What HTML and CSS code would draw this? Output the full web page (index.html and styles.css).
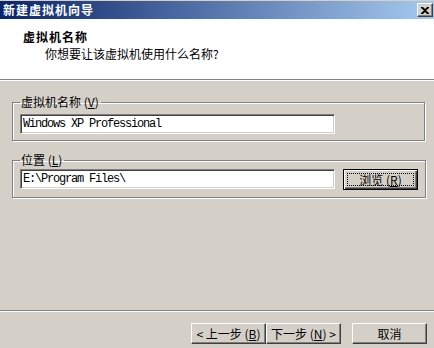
FILE: index.html
```html
<!DOCTYPE html>
<html lang="zh-CN">

<head>
    <meta charset="UTF-8">
    <title>新建虚拟机向导</title>
    <link rel="stylesheet" href="styles.css">
</head>

<body>
    <div class="window">
        <div class="titlebar">
            <span class="title">新建虚拟机向导</span>
            <span class="close-btn">
                <svg width="8" height="7" viewBox="0 0 8 7">
                    <path d="M0 0h2l2 2 2-2h2v1L5 3.5 8 6v1H6L4 5 2 7H0V6l3-2.5L0 1z" fill="#000" />
                </svg>
            </span>
        </div>
        <div class="header">
            <div class="header-title">虚拟机名称</div>
            <div class="header-sub">你想要让该虚拟机使用什么名称?</div>
        </div>
        <div class="etched"></div>

        <div class="content">
            <fieldset class="group">
                <legend>虚拟机名称 (<u>V</u>)</legend>
                <input type="text" class="textbox" value="Windows XP Professional">
            </fieldset>
            <fieldset class="group group-location">
                <legend>位置 (<u>L</u>)</legend>
                <div class="row">
                    <input type="text" class="textbox" value="E:\Program Files\">
                    <button type="button" class="btn btn-default">浏览 (<u>R</u>)</button>
                </div>
            </fieldset>
        </div>

        <div class="etched"></div>
        <div class="footer">
            <button type="button" class="btn">&lt; 上一步 (<u>B</u>)</button>
            <button type="button" class="btn">下一步 (<u>N</u>) &gt;</button>
            <button type="button" class="btn btn-cancel">取消</button>
        </div>
    </div>
</body>

</html>
```

FILE: styles.css
```css
body {
    margin: 0;
    background-color: #d4d0c8;
    font-family: "Noto Sans CJK SC", "Liberation Sans", sans-serif;
    font-size: 12px;
    color: #000;
}

.window {
    width: 434px;
    height: 348px;
    padding-top: 1px;
    box-sizing: border-box;
    display: flex;
    flex-direction: column;
    background-color: #d4d0c8;
    overflow: hidden;
}

.titlebar {
    height: 18px;
    display: flex;
    align-items: center;
    justify-content: space-between;
    padding: 0 1px 0 3px;
    background: linear-gradient(to right, #0a246a, #a6caf0);
}

.title {
    color: #fff;
    font-weight: bold;
    letter-spacing: 1px;
    line-height: 14px;
}

.close-btn {
    width: 14px;
    height: 12px;
    display: flex;
    align-items: center;
    justify-content: center;
    background-color: #d4d0c8;
    border: 1px solid;
    border-color: #fff #404040 #404040 #fff;
    box-shadow: inset -1px -1px 0 #808080;
}

.header {
    height: 60px;
    box-sizing: border-box;
    padding-top: 9px;
    background-color: #fff;
    line-height: 17px;
}

.header-title {
    padding-left: 23px;
    font-weight: bold;
    letter-spacing: 1px;
}

.header-sub {
    padding-left: 45px;
}

.etched {
    height: 0;
    border-top: 1px solid #808080;
    border-bottom: 1px solid #fff;
}

.content {
    flex: 1;
    padding: 14px 9px 0 12px;
}

.group {
    margin: 0;
    padding: 4px 7px 6px 7px;
    border: 1px solid #808080;
    box-shadow: inset 1px 1px 0 #fff, 1px 1px 0 #fff;
}

.group legend {
    padding: 0 2px 0 1px;
    line-height: 14px;
}

.group-location {
    margin-top: 12px;
    padding: 2px 7px 7px 7px;
}

.row {
    display: flex;
    align-items: flex-start;
    gap: 8px;
}

.textbox {
    width: 315px;
    height: 20px;
    box-sizing: border-box;
    margin: 0;
    padding: 0 0 0 2px;
    border: 1px solid;
    border-color: #808080 #fff #fff #808080;
    box-shadow: inset 1px 1px 0 #404040, inset -1px -1px 0 #d4d0c8;
    background-color: #fff;
    font-family: "Liberation Mono", monospace;
    font-size: 12px;
    letter-spacing: -1.2px;
    color: #000;
    outline: none;
}

.btn {
    position: relative;
    width: 75px;
    height: 21px;
    margin: 0;
    padding: 0;
    box-sizing: border-box;
    background-color: #d4d0c8;
    border: 1px solid;
    border-color: #fff #404040 #404040 #fff;
    box-shadow: inset -1px -1px 0 #808080;
    font-family: "Noto Sans CJK SC", "Liberation Sans", sans-serif;
    font-size: 12px;
    line-height: 14px;
    color: #000;
}

.btn-default {
    border: 1px solid #000;
    box-shadow: inset 1px 1px 0 #fff, inset -1px -1px 0 #404040, inset -2px -2px 0 #808080;
}

.btn-default::after {
    content: "";
    position: absolute;
    top: 3px;
    left: 3px;
    right: 3px;
    bottom: 3px;
    border: 1px dotted #000;
}

.footer {
    height: 36px;
    box-sizing: border-box;
    display: flex;
    justify-content: flex-end;
    align-items: flex-start;
    padding: 11px 7px 0 0;
}

.btn-cancel {
    margin-left: 11px;
}
```
